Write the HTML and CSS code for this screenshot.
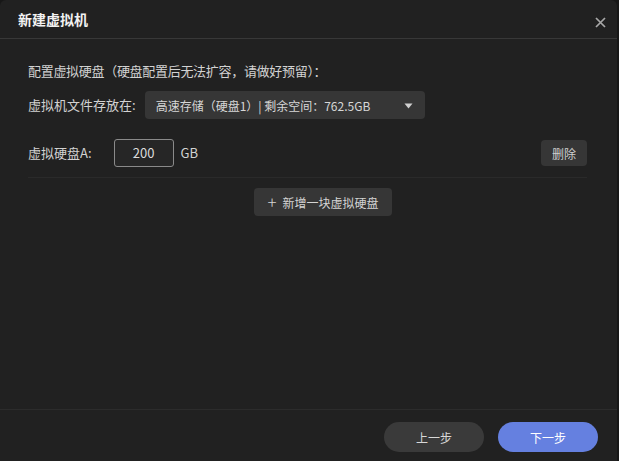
FILE: index.html
```html
<!DOCTYPE html>
<html lang="zh-CN">
<head>
<meta charset="utf-8">
<title>新建虚拟机</title>
<link rel="stylesheet" href="styles.css">
</head>
<body>
<div class="dialog">
  <div class="header">
    <span class="title">新建虚拟机</span>
    <svg class="close" width="11" height="11" viewBox="0 0 11 11"><path d="M1 1L10 10M10 1L1 10" stroke="#a8a8a8" stroke-width="1.7" fill="none"/></svg>
  </div>
  <div class="content">
    <div class="intro">配置虚拟硬盘（硬盘配置后无法扩容，请做好预留）：</div>
    <div class="row">
      <span class="label">虚拟机文件存放在:</span>
      <div class="select">
        <span class="select-text">高速存储（硬盘1）| 剩余空间：762.5GB</span>
        <svg class="caret" width="9" height="6" viewBox="0 0 9 6"><path d="M0.5 0.5H8.5L4.5 5.5Z" fill="#d0d0d0"/></svg>
      </div>
    </div>
    <div class="row disk-row">
      <span class="label">虚拟硬盘A:</span>
      <div class="size-input">200</div>
      <span class="unit">GB</span>
      <button class="btn-small">删除</button>
    </div>
    <div class="add-wrap">
      <button class="btn-add"><span class="plus">+</span>新增一块虚拟硬盘</button>
    </div>
  </div>
  <div class="footer">
    <button class="btn-round btn-prev">上一步</button>
    <button class="btn-round btn-next">下一步</button>
  </div>
</div>
</body>
</html>
```
FILE: styles.css
```css
html, body {
  margin: 0;
  padding: 0;
  background: #171717;
  height: 100%;
  overflow: hidden;
}
body {
  font-family: "Noto Sans CJK SC", "Noto Sans", sans-serif;
  color: #d2d2d2;
}
.dialog {
  width: 617px;
  height: 461px;
  background: #212121;
  border-radius: 6px 6px 0 0;
  display: flex;
  flex-direction: column;
  box-sizing: border-box;
}
.header {
  height: 38px;
  border-bottom: 1px solid #383838;
  display: flex;
  align-items: center;
  justify-content: space-between;
  padding: 0 12px 0 18px;
  flex: none;
}
.title {
  font-size: 14px;
  font-weight: bold;
  color: #f2f2f2;
  line-height: 1;
  margin-top: -1px;
}
.close {
  margin-top: 6px;
  margin-right: -1px;
}
.content {
  flex: 1;
  padding: 22px 30px 0 28px;
  font-size: 13px;
}
.intro {
  line-height: 20px;
  height: 20px;
  letter-spacing: -0.3px;
}
.row {
  display: flex;
  align-items: center;
  height: 28px;
  margin-top: 10px;
}
.label {
  line-height: 20px;
}
.select {
  margin-left: 9px;
  width: 280px;
  height: 28px;
  box-sizing: border-box;
  background: #363636;
  border-radius: 4px;
  display: flex;
  align-items: center;
  justify-content: space-between;
  padding: 0 12px 0 11px;
}
.select-text {
  font-size: 12px;
  color: #d6d6d6;
}
.caret {
  margin-top: 1px;
}
.disk-row {
  margin-top: 20px;
  padding-bottom: 10px;
  box-sizing: border-box;
  border-bottom: 1px solid #2a2a2a;
  align-items: flex-start;
  height: 39px;
}
.disk-row .label {
  margin-top: 4px;
}
.size-input {
  margin-left: 22px;
  width: 60px;
  height: 28px;
  box-sizing: border-box;
  border: 1px solid #8a8a8a;
  border-radius: 3px;
  background: #262626;
  text-align: center;
  line-height: 26px;
  font-size: 13px;
  color: #dcdcdc;
}
.unit {
  margin-left: 7px;
  line-height: 28px;
  font-size: 13px;
}
.btn-small {
  margin-left: auto;
  margin-top: 1px;
  width: 46px;
  height: 26px;
  border: none;
  border-radius: 4px;
  background: #363636;
  color: #d0d0d0;
  font-family: inherit;
  font-size: 12px;
  padding: 0;
}
.add-wrap {
  padding-top: 10px;
  padding-left: 226px;
}
.btn-add {
  width: 138px;
  height: 28px;
  border: none;
  border-radius: 4px;
  background: #363636;
  color: #d4d4d4;
  font-family: inherit;
  font-size: 12px;
  padding: 0;
  display: flex;
  align-items: center;
  justify-content: center;
}
.plus {
  font-size: 17px;
  font-weight: 300;
  margin-right: 6px;
  line-height: 1;
  margin-top: -2px;
}
.footer {
  flex: none;
  height: 52px;
  border-top: 1px solid #2c2c2c;
  display: flex;
  justify-content: flex-end;
  gap: 14px;
  padding: 12px 19px 0 0;
  box-sizing: border-box;
}
.btn-round {
  width: 100px;
  height: 30px;
  border: none;
  border-radius: 15px;
  font-family: inherit;
  font-size: 12px;
  padding: 0;
}
.btn-prev {
  background: #3a3a3a;
  color: #d8d8d8;
}
.btn-next {
  background: #6580e0;
  color: #ffffff;
}
```
